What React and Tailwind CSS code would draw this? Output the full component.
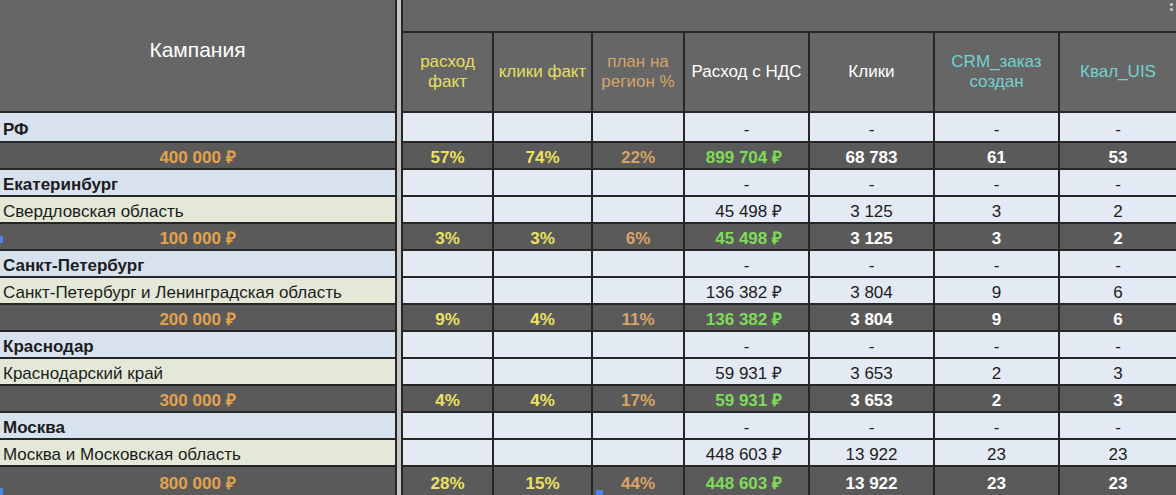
import React from 'react'

const rows = [
  { type: 'group', name: 'РФ' },
  { type: 'total', name: '400 000 ₽', cells: ['57%', '74%', '22%', '899 704 ₽', '68 783', '61', '53'] },
  { type: 'group', name: 'Екатеринбург' },
  { type: 'sub', name: 'Свердловская область', cells: ['', '', '', '45 498 ₽', '3 125', '3', '2'] },
  { type: 'total', name: '100 000 ₽', cells: ['3%', '3%', '6%', '45 498 ₽', '3 125', '3', '2'] },
  { type: 'group', name: 'Санкт-Петербург' },
  { type: 'sub', name: 'Санкт-Петербург и Ленинградская область', cells: ['', '', '', '136 382 ₽', '3 804', '9', '6'] },
  { type: 'total', name: '200 000 ₽', cells: ['9%', '4%', '11%', '136 382 ₽', '3 804', '9', '6'] },
  { type: 'group', name: 'Краснодар' },
  { type: 'sub', name: 'Краснодарский край', cells: ['', '', '', '59 931 ₽', '3 653', '2', '3'] },
  { type: 'total', name: '300 000 ₽', cells: ['4%', '4%', '17%', '59 931 ₽', '3 653', '2', '3'] },
  { type: 'group', name: 'Москва' },
  { type: 'sub', name: 'Москва и Московская область', cells: ['', '', '', '448 603 ₽', '13 922', '23', '23'] },
  { type: 'total', name: '800 000 ₽', cells: ['28%', '15%', '44%', '448 603 ₽', '13 922', '23', '23'] },
]

const groupCells = ['', '', '', '-', '-', '-', '-']

const headers = [
  { label: ['расход', 'факт'], color: 'text-[#e8df5e]' },
  { label: ['клики факт'], color: 'text-[#e8df5e]' },
  { label: ['план на', 'регион %'], color: 'text-[#d6a468]' },
  { label: ['Расход с НДС'], color: 'text-white' },
  { label: ['Клики'], color: 'text-white' },
  { label: ['CRM_заказ', 'создан'], color: 'text-[#72d2d2]' },
  { label: ['Квал_UIS'], color: 'text-[#72d2d2]' },
]

const cols = 'grid grid-cols-[91px_99px_92px_125px_125px_125px_1fr]'

// последняя строка обрезана краем окна
function rowHeight(i) {
  if (i === 0) return 'h-[30px]'
  if (i === rows.length - 1) return 'h-[30px]'
  return 'h-[27px]'
}

function LeftCell({ row, i }) {
  if (row.type === 'total') {
    return (
      <div className={`${rowHeight(i)} shrink-0 border-b-2 border-[#262626] bg-[#5a5a5a] flex items-center justify-center pt-[4px] font-bold text-[#e3a24c]`}>
        {row.name}
      </div>
    )
  }
  return (
    <div
      className={`${rowHeight(i)} shrink-0 border-b-2 border-[#262626] flex items-center pl-[3px] pt-[4px] text-[#1c1c1c] ${
        row.type === 'group' ? 'bg-[#d8e2ef] font-bold' : 'bg-[#e3e8d7]'
      }`}
    >
      {row.name}
    </div>
  )
}

function valueClass(row, c) {
  if (row.type !== 'total') return 'text-[#1c1c1c]'
  if (c < 2) return 'text-[#ece260] font-bold'
  if (c === 2) return 'text-[#d9a466] font-bold'
  if (c === 3) return 'text-[#7fdc58] font-bold'
  return 'text-white font-bold'
}

function RightRow({ row, i }) {
  const cells = row.type === 'group' ? groupCells : row.cells
  const bg = row.type === 'total' ? 'bg-[#5a5a5a]' : 'bg-[#e4eaf3]'
  return (
    <div className={`${cols} ${rowHeight(i)} shrink-0 border-b-2 border-[#262626] ${bg}`}>
      {cells.map((v, c) => (
        <div
          key={c}
          className={`flex items-center pt-[4px] ${c < 6 ? 'border-r-2 border-[#262626]' : ''} ${
            c === 3 && v !== '-' ? 'justify-end pr-[26px]' : 'justify-center'
          } ${valueClass(row, c)}`}
        >
          {v}
        </div>
      ))}
    </div>
  )
}

export default function App() {
  return (
    <div className="relative w-[1176px] h-[495px] overflow-hidden flex bg-[#c6c6c6] text-[17px] leading-none font-['Liberation_Sans',Arial,sans-serif]">
      {/* Кампания */}
      <div className="w-[397px] shrink-0 border-r-2 border-[#262626] flex flex-col">
        <div className="h-[113px] shrink-0 bg-[#666666] border-b-2 border-[#262626] flex items-center justify-center pb-[13px] text-white text-[21px]">
          Кампания
        </div>
        {rows.map((row, i) => (
          <LeftCell key={i} row={row} i={i} />
        ))}
      </div>

      {/* разделитель */}
      <div className="w-[4px] shrink-0" />

      {/* метрики */}
      <div className="flex-1 border-l-2 border-[#262626] flex flex-col">
        <div className="h-[33px] shrink-0 bg-[#666666] border-b-2 border-[#262626] relative">
          <span className="absolute right-[3px] top-[3px] flex flex-col gap-[2px]">
            <span className="w-[3px] h-[3px] bg-[#d0d0d0] rounded-full" />
            <span className="w-[3px] h-[3px] bg-[#d0d0d0] rounded-full" />
          </span>
        </div>
        <div className={`${cols} h-[80px] shrink-0 bg-[#666666] border-b-2 border-[#262626]`}>
          {headers.map((h, c) => (
            <div
              key={c}
              className={`flex flex-col items-center justify-center text-center leading-[20px] ${h.color} ${
                c < 6 ? 'border-r-2 border-[#262626]' : ''
              }`}
            >
              {h.label.map((l) => (
                <span key={l}>{l}</span>
              ))}
            </div>
          ))}
        </div>
        {rows.map((row, i) => (
          <RightRow key={i} row={row} i={i} />
        ))}
      </div>

      {/* маркеры выделения */}
      <span className="absolute left-0 top-[236px] w-[3px] h-[7px] bg-[#4a86e8]" />
      <span className="absolute left-0 top-[488px] w-[3px] h-[7px] bg-[#4a86e8]" />
      <span className="absolute left-[596px] top-[490px] w-[7px] h-[5px] bg-[#4a86e8]" />
    </div>
  )
}
